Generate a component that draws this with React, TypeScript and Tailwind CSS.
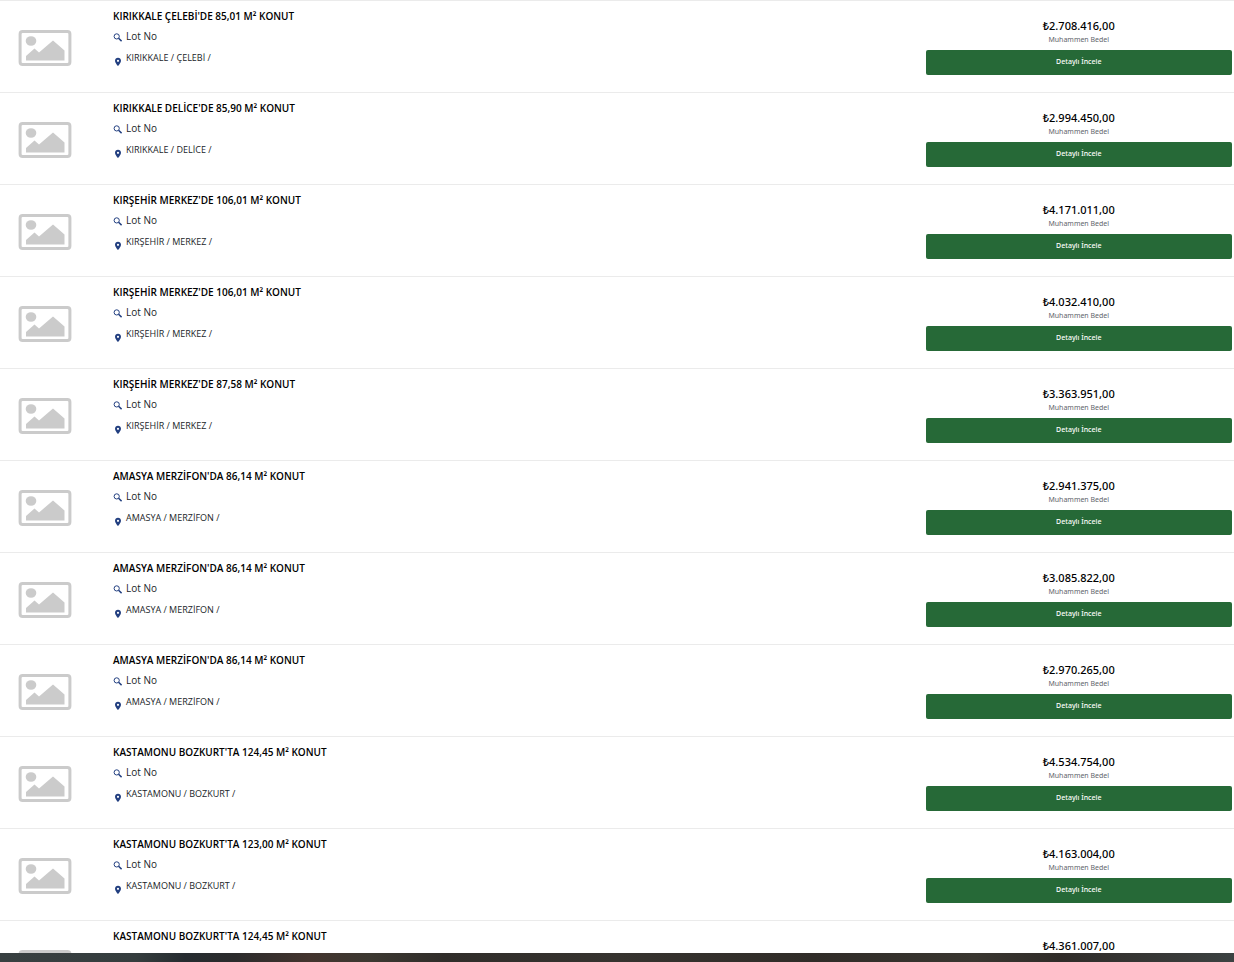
interface Listing {
  title: string;
  location?: string;
  price: string;
}

const listings: Listing[] = [
  { title: "KIRIKKALE ÇELEBİ'DE 85,01 M² KONUT", location: "KIRIKKALE / ÇELEBİ /", price: "₺2.708.416,00" },
  { title: "KIRIKKALE DELİCE'DE 85,90 M² KONUT", location: "KIRIKKALE / DELİCE /", price: "₺2.994.450,00" },
  { title: "KIRŞEHİR MERKEZ'DE 106,01 M² KONUT", location: "KIRŞEHİR / MERKEZ /", price: "₺4.171.011,00" },
  { title: "KIRŞEHİR MERKEZ'DE 106,01 M² KONUT", location: "KIRŞEHİR / MERKEZ /", price: "₺4.032.410,00" },
  { title: "KIRŞEHİR MERKEZ'DE 87,58 M² KONUT", location: "KIRŞEHİR / MERKEZ /", price: "₺3.363.951,00" },
  { title: "AMASYA MERZİFON'DA 86,14 M² KONUT", location: "AMASYA / MERZİFON /", price: "₺2.941.375,00" },
  { title: "AMASYA MERZİFON'DA 86,14 M² KONUT", location: "AMASYA / MERZİFON /", price: "₺3.085.822,00" },
  { title: "AMASYA MERZİFON'DA 86,14 M² KONUT", location: "AMASYA / MERZİFON /", price: "₺2.970.265,00" },
  { title: "KASTAMONU BOZKURT'TA 124,45 M² KONUT", location: "KASTAMONU / BOZKURT /", price: "₺4.534.754,00" },
  { title: "KASTAMONU BOZKURT'TA 123,00 M² KONUT", location: "KASTAMONU / BOZKURT /", price: "₺4.163.004,00" },
  { title: "KASTAMONU BOZKURT'TA 124,45 M² KONUT", price: "₺4.361.007,00" },
];

const PlaceholderImage = () => (
  <svg viewBox="0 0 54 38" className="w-[54px] h-[38px] text-[#cbcbcb]" aria-hidden="true">
    <rect x="2.1" y="2.4" width="49.8" height="33.2" rx="2.5" fill="none" stroke="currentColor" strokeWidth="3" />
    <ellipse cx="13" cy="12" rx="5.3" ry="4.8" fill="currentColor" />
    <path d="M8 31.5V27L16.5 19.5L21 23.5L35 11.5L46.5 21.5V31.5Z" fill="currentColor" />
  </svg>
);

const SearchIcon = () => (
  <svg viewBox="0 0 9 9" className="w-[9px] h-[9px] shrink-0 text-[#223f80]" fill="none" stroke="currentColor" aria-hidden="true">
    <circle cx="3.7" cy="3.4" r="2.6" strokeWidth="1" />
    <path d="M5.6 5.3L8.6 8.2" strokeWidth="1.5" />
  </svg>
);

const PinIcon = () => (
  <svg viewBox="0 0 9 9" className="w-[9px] h-[9px] shrink-0 text-[#223f80]" aria-hidden="true">
    <path
      d="M5 0.8C3.3 0.8 2 2.1 2 3.7C2 5.8 5 9 5 9S8 5.8 8 3.7C8 2.1 6.7 0.8 5 0.8ZM5 2.7A1.1 1.1 0 1 1 5 4.9A1.1 1.1 0 0 1 5 2.7Z"
      fill="currentColor"
      fillRule="evenodd"
    />
  </svg>
);

const ListingRow = ({ title, location, price }: Listing) => {
  return (
    <li className="flex items-start border-t border-[#ebebeb]">
      <div className="w-[90px] shrink-0 flex justify-center pt-7">
        <PlaceholderImage />
      </div>

      <div className="flex-1 min-w-0 pl-[23px] pt-[7px]">
        <h2 className="text-[10px] leading-4 font-semibold text-black">{title}</h2>
        {location && (
          <>
            <div className="flex items-center gap-1 mt-1 text-[10px] leading-4 text-[#212529]">
              <div className="pt-[2px]">
                <SearchIcon />
              </div>
              Lot No
            </div>
            <div className="flex items-center gap-1 mt-[5px] text-[9px] leading-4 text-[#212529]">
              <div className="pt-2">
                <PinIcon />
              </div>
              {location}
            </div>
          </>
        )}
      </div>

      <div className="w-1/4 shrink-0 flex flex-col pt-[17px] pb-[17px] pr-[2px] text-center font-['Noto_Sans',sans-serif]">
        <div className="text-[11px] leading-4 font-medium text-black">{price}</div>
        {location && (
          <>
            <div className="text-[7px] leading-3 text-[#5f666c]">Muhammen Bedel</div>
            <button type="button" className="mt-1 h-[25px] rounded-xs bg-[#266937] text-[7px] font-medium text-white">
              Detaylı İncele
            </button>
          </>
        )}
      </div>
    </li>
  );
};

const App = () => {
  return (
    <div className="h-screen flex flex-col bg-white font-['Open_Sans','Noto_Sans',sans-serif]">
      <ul className="flex-1 min-h-0 overflow-hidden">
        {listings.map((listing, i) => (
          <ListingRow key={i} {...listing} />
        ))}
      </ul>
      <div className="h-[9px] shrink-0 bg-[linear-gradient(to_right,#384041_0%,#353d3e_11%,#262c30_15%,#2b2b2c_19%,#43342e_25%,#3c3831_30%,#302d2a_36%,#36332f_50%,#302c28_66%,#393630_79%,#302c29_86%,#393b3a_96%,#3c4242_100%)]" />
    </div>
  );
};

export default App;
